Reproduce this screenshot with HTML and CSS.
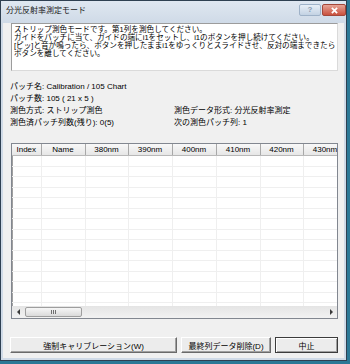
FILE: index.html
```html
<!DOCTYPE html>
<html lang="ja">
<head>
    <meta charset="UTF-8">
    <title>分光反射率測定モード</title>
    <link rel="stylesheet" href="styles.css">
</head>
<body>
    <div class="window">
        <div class="titlebar">
            <span class="title">分光反射率測定モード</span>
            <div class="caption-buttons">
                <div class="cap-btn help">?</div>
                <div class="cap-btn close">
                    <svg viewBox="0 0 10 8">
                        <path d="M2 1 L8 7 M8 1 L2 7"></path>
                    </svg>
                </div>
            </div>
        </div>

        <div class="client">
            <div class="message">
                ストリップ測色モードです。第1列を測色してください。<br>
                ガイドをパッチに当て、ガイドの端にi1をセットし、i1のボタンを押し続けてください。<br>
                [ピッ]と音が鳴ったら、ボタンを押したままi1をゆっくりとスライドさせ、反対の端まできたら<br>
                ボタンを離してください。
            </div>

            <div class="info">
                <div class="info-row">パッチ名: Calibration / 105 Chart</div>
                <div class="info-row">パッチ数: 105 ( 21 x 5 )</div>
                <div class="info-row">
                    <span>測色方式: ストリップ測色</span>
                    <span>測色データ形式: 分光反射率測定</span>
                </div>
                <div class="info-row">
                    <span>測色済パッチ列数(残り): 0(5)</span>
                    <span>次の測色パッチ列: 1</span>
                </div>
            </div>

            <div class="grid">
                <div class="grid-view">
                    <table class="patch-table">
                        <colgroup>
                            <col class="c-index">
                            <col class="c-name">
                            <col class="c-nm">
                            <col class="c-nm2">
                            <col class="c-nm2">
                            <col class="c-nm2">
                            <col class="c-nm">
                            <col class="c-nm2">
                        </colgroup>
                        <thead>
                            <tr>
                                <th>Index</th>
                                <th>Name</th>
                                <th>380nm</th>
                                <th>390nm</th>
                                <th>400nm</th>
                                <th>410nm</th>
                                <th>420nm</th>
                                <th>430nm</th>
                            </tr>
                        </thead>
                        <tbody>
                            <tr><td></td><td></td><td></td><td></td><td></td><td></td><td></td><td></td></tr>
                            <tr><td></td><td></td><td></td><td></td><td></td><td></td><td></td><td></td></tr>
                            <tr><td></td><td></td><td></td><td></td><td></td><td></td><td></td><td></td></tr>
                            <tr><td></td><td></td><td></td><td></td><td></td><td></td><td></td><td></td></tr>
                            <tr><td></td><td></td><td></td><td></td><td></td><td></td><td></td><td></td></tr>
                            <tr><td></td><td></td><td></td><td></td><td></td><td></td><td></td><td></td></tr>
                            <tr><td></td><td></td><td></td><td></td><td></td><td></td><td></td><td></td></tr>
                            <tr><td></td><td></td><td></td><td></td><td></td><td></td><td></td><td></td></tr>
                            <tr><td></td><td></td><td></td><td></td><td></td><td></td><td></td><td></td></tr>
                            <tr><td></td><td></td><td></td><td></td><td></td><td></td><td></td><td></td></tr>
                            <tr><td></td><td></td><td></td><td></td><td></td><td></td><td></td><td></td></tr>
                            <tr><td></td><td></td><td></td><td></td><td></td><td></td><td></td><td></td></tr>
                            <tr><td></td><td></td><td></td><td></td><td></td><td></td><td></td><td></td></tr>
                            <tr><td></td><td></td><td></td><td></td><td></td><td></td><td></td><td></td></tr>
                            <tr><td></td><td></td><td></td><td></td><td></td><td></td><td></td><td></td></tr>
                            <tr><td></td><td></td><td></td><td></td><td></td><td></td><td></td><td></td></tr>
                        </tbody>
                    </table>
                </div>
                <div class="hscroll">
                    <div class="scroll-arrow"><span class="tri left"></span></div>
                    <div class="scroll-thumb"><span class="grip"></span></div>
                    <div class="scroll-track"></div>
                    <div class="scroll-arrow"><span class="tri right"></span></div>
                </div>
            </div>

            <div class="buttons">
                <div class="btn btn-calib">強制キャリブレーション(W)</div>
                <div class="btn btn-delete">最終列データ削除(D)</div>
                <div class="btn btn-cancel">中止</div>
            </div>
        </div>
    </div>
</body>
</html>
```

FILE: styles.css
```css
body {
    margin: 0;
    width: 350px;
    height: 364px;
    overflow: hidden;
    background-color: #2b7896;
    font-family: "Liberation Sans", "Noto Sans CJK JP", sans-serif;
    font-size: 8px;
    color: #000;
}

.window {
    width: 347px;
    height: 361px;
    box-sizing: border-box;
    border: 1px solid #2f4052;
    background-color: #cfdae7;
    display: flex;
    flex-direction: column;
}

.titlebar {
    height: 22px;
    display: flex;
    align-items: flex-start;
    padding-left: 5px;
    background: linear-gradient(#dfe7f1, #cfdae7);
}

.title {
    line-height: 20px;
    color: #1a1a1a;
}

.caption-buttons {
    margin-left: auto;
    margin-top: 3px;
    display: flex;
    gap: 1px;
}

.cap-btn {
    height: 12px;
    box-sizing: border-box;
    border-radius: 2px;
    display: flex;
    align-items: center;
    justify-content: center;
}

.help {
    width: 22px;
    border: 1px solid #9fb2c8;
    background: linear-gradient(#e8eff7, #c3d2e3);
    color: #8a9bb0;
    font-size: 8px;
    font-weight: bold;
    line-height: 10px;
}

.close {
    width: 24px;
    border: 1px solid #a3473a;
    background: linear-gradient(#e7a497, #c9503d);
}

.close svg {
    width: 9px;
    height: 7px;
    fill: none;
    stroke: #fff;
    stroke-width: 2px;
}

.client {
    flex: 1;
    margin: 0 2px 2px;
    padding: 0 6px 0 7px;
    background-color: #f0f0f0;
    display: flex;
    flex-direction: column;
}

.message {
    height: 48px;
    box-sizing: border-box;
    margin-left: 1px;
    padding: 2px 2px;
    border: 1px solid;
    border-color: #9c9c9c #dadada #dadada #9c9c9c;
    background-color: #fff;
    line-height: 8px;
    font-size: 7.6px;
    white-space: nowrap;
}

.info {
    margin-top: 10px;
    line-height: 12px;
}

.info-row {
    display: grid;
    grid-template-columns: 164px 1fr;
}

.grid {
    margin-top: 14px;
    margin-left: 1px;
    height: 176px;
    box-sizing: border-box;
    border: 1px solid #828790;
    box-shadow: inset 1px 0 #a0a0a0;
    background-color: #fff;
    display: flex;
    flex-direction: column;
}

.grid-view {
    height: 162px;
    overflow: hidden;
}

.patch-table {
    width: 335px;
    table-layout: fixed;
    border-collapse: collapse;
}

.c-index { width: 29px; }
.c-name { width: 44px; }
.c-nm { width: 43px; }
.c-nm2 { width: 44px; }

.patch-table th {
    height: 11px;
    padding: 0;
    font-weight: normal;
    font-size: 8px;
    line-height: 10px;
    text-align: center;
    background: linear-gradient(#f8f8f8, #e6e6e6);
    border-right: 1px solid #a8a8a8;
    border-bottom: 1px solid #b8b8b8;
}

.patch-table td {
    height: 9.5px;
    padding: 0;
    border-right: 1px solid #efefef;
    border-bottom: 1px solid #efefef;
}

.hscroll {
    height: 12px;
    display: flex;
    background: linear-gradient(#e4e4e4, #f2f2f2);
}

.scroll-arrow {
    width: 12px;
    display: flex;
    align-items: center;
    justify-content: center;
}

.tri {
    width: 0;
    height: 0;
    border-top: 3px solid transparent;
    border-bottom: 3px solid transparent;
}

.tri.left {
    border-right: 3px solid #3a3a3a;
}

.tri.right {
    border-left: 3px solid #3a3a3a;
}

.scroll-thumb {
    width: 57px;
    margin: 1px 0 1px 1px;
    box-sizing: border-box;
    border: 1px solid #9e9e9e;
    border-radius: 2px;
    background: linear-gradient(#f6f6f6, #dadada);
    display: flex;
    align-items: center;
    justify-content: center;
}

.grip {
    width: 5px;
    height: 4px;
    background: repeating-linear-gradient(90deg, #707070 0 1px, transparent 1px 2px);
}

.scroll-track {
    flex: 1;
}

.buttons {
    margin-top: 18px;
    display: flex;
    gap: 4px;
}

.btn {
    height: 16px;
    box-sizing: border-box;
    border: 1px solid;
    border-color: #fff #6a6a6a #6a6a6a #fff;
    box-shadow: inset -1px -1px #a0a0a0;
    background-color: #ececec;
    display: flex;
    align-items: center;
    justify-content: center;
    font-size: 8px;
}

.btn-calib { width: 167px; }
.btn-delete { width: 90px; }

.btn-cancel {
    width: 63px;
    border-color: #3c3c3c;
    box-shadow: inset 1px 1px #fff, inset -1px -1px #a0a0a0;
}
```
